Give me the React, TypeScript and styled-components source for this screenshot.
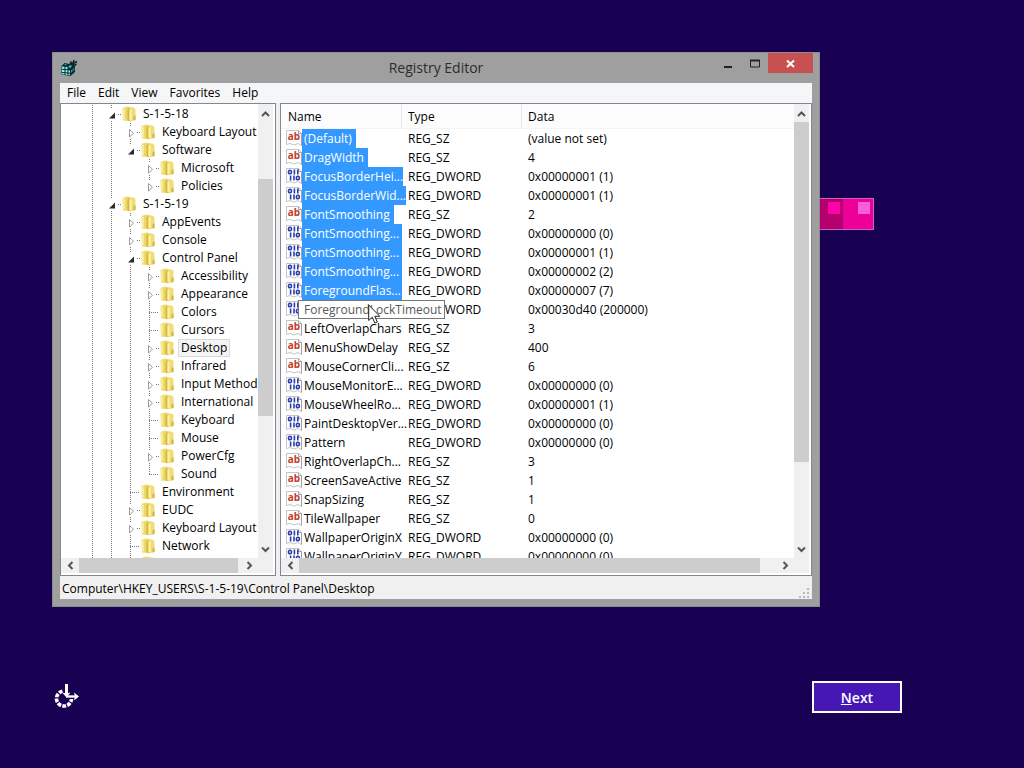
import React from "react";
import styled, { createGlobalStyle, css } from "styled-components";

const GlobalStyle = createGlobalStyle`
  *, *::before, *::after { box-sizing: border-box; }
  body {
    margin: 0;
    background: #180052;
    color: #000;
    font: 12px/18px "Open Sans", "Noto Sans", sans-serif;
  }
  button { margin: 0; padding: 0; border: 0; background: none; font: inherit; color: inherit; }
`;

const Desktop = styled.main`
  display: flex;
  flex-direction: column;
  min-height: 100vh;
  padding-top: 52px;
`;

const Stage = styled.div`
  display: flex;
  align-items: flex-start;
  padding-left: 52px;
`;

const Window = styled.section`
  display: flex;
  flex-direction: column;
  width: calc(100vw - 256px);
  height: calc(100vh - 213px);
  min-height: 300px;
  padding: 0 7px 7px;
  background: #9f9f9f;
  border: 1px solid #8c8c8c;
`;

const TitleBar = styled.header`
  display: grid;
  grid-template-columns: 92px 1fr 92px;
  flex: none;
  height: 30px;
  align-items: start;
`;

const AppIcon = styled.svg`
  margin: 6px 0 0 1px;
`;

const Title = styled.h1`
  margin: 0;
  padding-top: 4px;
  font-size: 14px;
  line-height: 22px;
  font-weight: 400;
  text-align: center;
  color: #2c2c2c;
`;

const Controls = styled.div`
  display: flex;
  justify-content: flex-end;
  margin-right: -1px;
`;

const ControlButton = styled.button<{ $close?: boolean }>`
  display: grid;
  place-items: center;
  flex: none;
  width: ${(p) => (p.$close ? 45 : 27)}px;
  height: 20px;
  background: ${(p) => (p.$close ? "#c75050" : "transparent")};
`;

const Client = styled.div`
  display: flex;
  flex-direction: column;
  flex: 1;
  min-height: 0;
  background: #f0f0f0;
`;

const MenuBar = styled.nav`
  display: flex;
  flex: none;
  height: 20px;
  padding-left: 1px;
  background: #f5f6f7;
`;

const MenuButton = styled.button`
  padding: 0 6px;
  line-height: 20px;
`;

const Panes = styled.div`
  display: grid;
  grid-template-columns: 216px minmax(0, 1fr);
  column-gap: 4px;
  flex: 1;
  min-height: 0;
`;

const Pane = styled.div`
  display: grid;
  grid-template-columns: minmax(0, 1fr) 15px;
  grid-template-rows: minmax(0, 1fr) 15px;
  min-height: 0;
  padding: 0 2px 2px 0;
  background: #fff;
  border: 1px solid #828790;
`;

const Viewport = styled.div`
  min-width: 0;
  overflow: hidden;
`;

const Bar = styled.div<{ $horizontal?: boolean }>`
  display: flex;
  flex-direction: ${(p) => (p.$horizontal ? "row" : "column")};
  background: #f0f0f0;
`;

const BarButton = styled.button<{ $horizontal?: boolean }>`
  display: grid;
  place-items: center;
  flex: none;
  ${(p) => (p.$horizontal ? css`width: 18px; height: 15px;` : css`width: 15px; height: 18px;`)}
`;

const BarSpace = styled.div<{ $share: number; $thumb?: boolean }>`
  flex: ${(p) => p.$share} 1 0;
  background: ${(p) => (p.$thumb ? "#cdcdcd" : "transparent")};
`;

const Corner = styled.div`
  background: #f0f0f0;
`;

const Tree = styled.ul`
  margin: 0;
  padding: 1px 0 0 22px;
  list-style: none;
`;

const TreeRow = styled.li`
  display: flex;
  height: 18px;
  white-space: nowrap;
`;

const TreeCell = styled.svg`
  flex: none;
`;

const TreeLabel = styled.span<{ $selected?: boolean }>`
  padding: 0 2px;
  line-height: 16px;
  border: 1px solid ${(p) => (p.$selected ? "#dadada" : "transparent")};
  background: ${(p) => (p.$selected ? "#f4f4f4" : "transparent")};
`;

const ValueTable = styled.table`
  width: 100%;
  table-layout: fixed;
  border-collapse: separate;
  border-spacing: 0;
`;

const HeadCell = styled.th<{ $width?: number; $first?: boolean }>`
  width: ${(p) => (p.$width ? `${p.$width}px` : "auto")};
  height: 25px;
  padding: 2px 6px 0 ${(p) => (p.$first ? 7 : 6)}px;
  font-weight: 400;
  text-align: left;
  background: #fcfcfc;
  border-right: ${(p) => (p.$width ? "1px solid #e6e6e6" : "0")};
  border-bottom: 1px solid #f4f4f4;
`;

const Cell = styled.td`
  height: 19px;
  padding: 0 6px;
  white-space: nowrap;
`;

const NameCell = styled.td`
  position: relative;
  height: 19px;
  padding: 0;
`;

const NameLine = styled.div`
  display: flex;
  padding-left: 5px;
  white-space: nowrap;
`;

const NameLabel = styled.span<{ $selected?: boolean; $full?: boolean }>`
  flex: ${(p) => (p.$full ? "1 0 auto" : "none")};
  padding: 0 ${(p) => (p.$full ? 0 : 4)}px 0 2px;
  line-height: 19px;
  color: ${(p) => (p.$selected ? "#fff" : "#000")};
  background: ${(p) => (p.$selected ? "#3399ff" : "transparent")};
`;

const Tooltip = styled.div`
  position: absolute;
  z-index: 1;
  top: 0;
  left: 17px;
  padding: 0 2px 0 5px;
  line-height: 17px;
  white-space: nowrap;
  color: #575757;
  background: #fff;
  border: 1px solid #767676;
`;

const Pointer = styled.svg`
  position: absolute;
  z-index: 2;
  top: 4px;
  left: 87px;
`;

const StatusBar = styled.footer`
  display: flex;
  justify-content: space-between;
  align-items: flex-end;
  flex: none;
  height: 23px;
  padding: 0 2px 0;
`;

const StatusText = styled.span`
  padding-bottom: 1px;
`;

const Footer = styled.div`
  display: flex;
  justify-content: space-between;
  align-items: center;
  margin-top: 74px;
  padding: 0 122px 0 52px;
`;

const EaseButton = styled.button`
  display: flex;
`;

const NextButton = styled.button`
  width: 90px;
  height: 32px;
  padding-top: 1px;
  border: 2px solid #fff;
  background: #4617b4;
  color: #fff;
  font-size: 14px;
  font-weight: 600;
`;

const Tile = styled.svg`
  margin-top: 146px;
`;

type Direction = "up" | "down" | "left" | "right";

const chevrons: Record<Direction, string> = {
  up: "M1 7 4.500 3.500 8 7",
  down: "M1 2.500 4.500 6 8 2.500",
  left: "M6.500 1 3 4.500 6.500 8",
  right: "M2.500 1 6 4.500 2.500 8",
};

function Arrow({ direction }: { direction: Direction }) {
  const horizontal = direction === "left" || direction === "right";
  return (
    <BarButton $horizontal={horizontal} aria-label={direction}>
      <svg width="9" height="9" viewBox="0 0 9 9">
        <path d={chevrons[direction]} fill="none" stroke="#555" strokeWidth="2" />
      </svg>
    </BarButton>
  );
}

function ScrollBar({ horizontal, shares }: { horizontal?: boolean; shares: [number, number, number] }) {
  return (
    <Bar $horizontal={horizontal}>
      <Arrow direction={horizontal ? "left" : "up"} />
      <BarSpace $share={shares[0]} />
      <BarSpace $share={shares[1]} $thumb />
      <BarSpace $share={shares[2]} />
      <Arrow direction={horizontal ? "right" : "down"} />
    </Bar>
  );
}

type Expander = "open" | "closed" | "leaf";
type Node = { label: string; level: number; state: Expander; last?: boolean; selected?: boolean };

const nodes: Node[] = [
  { label: "S-1-5-18", level: 1, state: "open" },
  { label: "Keyboard Layout", level: 2, state: "closed" },
  { label: "Software", level: 2, state: "open", last: true },
  { label: "Microsoft", level: 3, state: "closed" },
  { label: "Policies", level: 3, state: "closed", last: true },
  { label: "S-1-5-19", level: 1, state: "open" },
  { label: "AppEvents", level: 2, state: "closed" },
  { label: "Console", level: 2, state: "closed" },
  { label: "Control Panel", level: 2, state: "open" },
  { label: "Accessibility", level: 3, state: "closed" },
  { label: "Appearance", level: 3, state: "closed" },
  { label: "Colors", level: 3, state: "leaf" },
  { label: "Cursors", level: 3, state: "leaf" },
  { label: "Desktop", level: 3, state: "closed", selected: true },
  { label: "Infrared", level: 3, state: "closed" },
  { label: "Input Method", level: 3, state: "closed" },
  { label: "International", level: 3, state: "closed" },
  { label: "Keyboard", level: 3, state: "leaf" },
  { label: "Mouse", level: 3, state: "leaf" },
  { label: "PowerCfg", level: 3, state: "closed" },
  { label: "Sound", level: 3, state: "leaf", last: true },
  { label: "Environment", level: 2, state: "leaf" },
  { label: "EUDC", level: 2, state: "closed" },
  { label: "Keyboard Layout", level: 2, state: "closed" },
  { label: "Network", level: 2, state: "leaf" },
  { label: "", level: 2, state: "closed" },
];

/* A guide continues through a row when its branch still has siblings below. */
function hasGuide(index: number, level: number) {
  for (let i = index + 1; i < nodes.length; i++) {
    if (nodes[i].level < level) return false;
    if (nodes[i].level === level) return true;
  }
  return level < 2;
}

const dots = { stroke: "#777", strokeWidth: 1, strokeDasharray: "1 1" };

function GuideCell({ visible }: { visible: boolean }) {
  return (
    <TreeCell width="19" height="18" viewBox="0 0 19 18">
      {visible && <path d="M9.500 0V18" {...dots} />}
    </TreeCell>
  );
}

function ExpanderCell({ state, last }: { state: Expander; last?: boolean }) {
  return (
    <TreeCell width="19" height="18" viewBox="0 0 19 18">
      {state === "leaf" ? (
        <>
          <path d={last ? "M9.500 0V10" : "M9.500 0V18"} {...dots} />
          <path d="M9 9.500H19" {...dots} />
        </>
      ) : (
        <>
          <path d={last ? "M9.500 0V4" : "M9.500 0V4M9.500 16V18"} {...dots} />
          <path d="M16 9.500H19" {...dots} />
        </>
      )}
      {state === "open" && <path d="M13 7.500V13.500H7Z" fill="#2b2b2b" />}
      {state === "closed" && <path d="M8.500 6.500V14L12.500 10.250Z" fill="#fff" stroke="#999" />}
    </TreeCell>
  );
}

function Folder() {
  return (
    <TreeCell width="19" height="18" viewBox="0 0 19 18">
      <path d="M1.500 3 6 1.500 9 2V16L2 15.500Z" fill="#ecd968" />
      <path d="M8 2 12.500 2.500 14.500 4V15L8 16.500Z" fill="#f1dd74" />
      <path d="M3 3.500V14.500" stroke="#f7eb9c" strokeWidth="2" />
      <path d="M6.500 4.500 8.500 2.500V16L6.500 15.500Z" fill="#d6b63c" />
      <path d="M9.500 4.500V15" stroke="#fbf2ae" strokeWidth="2" />
      <path d="M12.500 11.500 14.500 10V15L12.500 15.500Z" fill="#d2b144" />
    </TreeCell>
  );
}

function TreeNode({ node, index }: { node: Node; index: number }) {
  const guides = Array.from({ length: node.level }, (_, level) => level);
  return (
    <TreeRow>
      {guides.map((level) => (
        <GuideCell key={level} visible={hasGuide(index, level)} />
      ))}
      <ExpanderCell state={node.state} last={node.last} />
      <Folder />
      <TreeLabel $selected={node.selected}>{node.label}</TreeLabel>
    </TreeRow>
  );
}

type Value = { name: string; dword?: boolean; data: string; selected?: boolean; tip?: string };

const values: Value[] = [
  { name: "(Default)", data: "(value not set)", selected: true },
  { name: "DragWidth", data: "4", selected: true },
  { name: "FocusBorderHei...", dword: true, data: "0x00000001 (1)", selected: true },
  { name: "FocusBorderWid...", dword: true, data: "0x00000001 (1)", selected: true },
  { name: "FontSmoothing", data: "2", selected: true },
  { name: "FontSmoothing...", dword: true, data: "0x00000000 (0)", selected: true },
  { name: "FontSmoothing...", dword: true, data: "0x00000001 (1)", selected: true },
  { name: "FontSmoothing...", dword: true, data: "0x00000002 (2)", selected: true },
  { name: "ForegroundFlas...", dword: true, data: "0x00000007 (7)", selected: true },
  { name: "", dword: true, data: "0x00030d40 (200000)", tip: "ForegroundLockTimeout" },
  { name: "LeftOverlapChars", data: "3" },
  { name: "MenuShowDelay", data: "400" },
  { name: "MouseCornerCli...", data: "6" },
  { name: "MouseMonitorE...", dword: true, data: "0x00000000 (0)" },
  { name: "MouseWheelRo...", dword: true, data: "0x00000001 (1)" },
  { name: "PaintDesktopVer...", dword: true, data: "0x00000000 (0)" },
  { name: "Pattern", dword: true, data: "0x00000000 (0)" },
  { name: "RightOverlapCh...", data: "3" },
  { name: "ScreenSaveActive", data: "1" },
  { name: "SnapSizing", data: "1" },
  { name: "TileWallpaper", data: "0" },
  { name: "WallpaperOriginX", dword: true, data: "0x00000000 (0)" },
  { name: "WallpaperOriginY", dword: true, data: "0x00000000 (0)" },
];

function ValueIcon({ dword }: { dword?: boolean }) {
  return (
    <TreeCell width="16" height="19" viewBox="0 0 16 19">
      <path d="M.5 1.500H12.500L15.500 4.500V16.500L12 14.500 8 16 4 14.500 .5 15.500Z" fill="#fff" stroke="#c4c4c4" />
      <path d="M12.500 1.500V4.500H15.500V16.500" fill="none" stroke="#a2a2a2" />
      {dword ? (
        <g fill="none" stroke="#2a3cab" strokeWidth="1.600">
          <ellipse cx="4" cy="5" rx="1.500" ry="1.800" />
          <path d="M8.400 2.500V7.400M11.800 2.500V7.400M4.600 8.600V13.500M8 8.600V13.500" />
          <ellipse cx="11.900" cy="11" rx="1.500" ry="1.800" />
        </g>
      ) : (
        <text x="1.800" y="11" fontFamily="Open Sans, sans-serif" fontSize="10" fontWeight="700" fill="#c33c2c">
          ab
        </text>
      )}
    </TreeCell>
  );
}

function ValueRow({ value }: { value: Value }) {
  return (
    <tr>
      <NameCell>
        <NameLine>
          <ValueIcon dword={value.dword} />
          <NameLabel $selected={value.selected} $full={value.name.endsWith("...")}>
            {value.name}
          </NameLabel>
        </NameLine>
        {value.tip && (
          <>
            <Tooltip role="tooltip">{value.tip}</Tooltip>
            <Pointer width="13" height="21" viewBox="0 0 13 21">
              <path
                d="M.7 1V16.500L4.300 13.200 6.800 19 9.300 18 6.800 12.300H11.800Z"
                fill="#fff"
                stroke="#222"
              />
            </Pointer>
          </>
        )}
      </NameCell>
      <Cell>{value.dword ? "REG_DWORD" : "REG_SZ"}</Cell>
      <Cell>{value.data}</Cell>
    </tr>
  );
}

function RegistryIcon() {
  return (
    <AppIcon width="17" height="18" viewBox="0 0 17 18">
      <path d="M.5 7 3.500 4 8 5 10 3 12.500 4.500 14 7V13L9.500 17 .5 15.500Z" fill="#0a2a2c" />
      <path d="M1 7.500 3.500 7.700V10L1 9.800ZM4.500 7.800 6.500 8V10.300L4.500 10.100ZM1 10.700 3.500 11V13.200L1 13ZM4.500 11 6.500 11.300V13.500L4.500 13.300ZM7.500 11.300 9 11.500V13.800L7.500 13.600ZM1 14 3.500 14.200V15.500L1 15.200ZM4.500 14.300 6.500 14.500V16L4.500 15.700ZM7.500 14.500 9 14.700V16.300L7.500 16Z" fill="#8ff2ee" />
      <path d="M10 11.500 11.500 10V12.500L10 14ZM12.300 9.300 13.300 8.300V11L12.300 12ZM4 5 6 5.300 5 6.300 3 6Z" fill="#2e9fa0" />
      <path d="M7 8 9 6 11 7 9.500 9Z" fill="#3fb9b8" />
      <path d="M9.500 2.500 11.500 5M13 1 12 4.500 16 2.500M13 6.500 15.500 5" stroke="#0a2a2c" strokeWidth="1.500" fill="none" />
    </AppIcon>
  );
}

export default function App() {
  return (
    <Desktop>
      <GlobalStyle />
      <Stage>
        <Window>
          <TitleBar>
            <RegistryIcon />
            <Title>Registry Editor</Title>
            <Controls>
              <ControlButton aria-label="Minimize">
                <svg width="9" height="9" viewBox="0 0 9 9">
                  <path d="M1 8H9" stroke="#222" strokeWidth="2" />
                </svg>
              </ControlButton>
              <ControlButton aria-label="Maximize">
                <svg width="11" height="9" viewBox="0 0 11 9">
                  <path d="M1.500 1.500H10.500V8H1.500Z" fill="none" stroke="#222" />
                  <path d="M1 1.500H11" stroke="#222" strokeWidth="2" />
                </svg>
              </ControlButton>
              <ControlButton $close aria-label="Close">
                <svg width="9" height="9" viewBox="0 0 9 9">
                  <path d="M1 1.500 8 8M8 1.500 1 8" stroke="#fff" strokeWidth="2" />
                </svg>
              </ControlButton>
            </Controls>
          </TitleBar>
          <Client>
            <MenuBar>
              {["File", "Edit", "View", "Favorites", "Help"].map((item) => (
                <MenuButton key={item}>{item}</MenuButton>
              ))}
            </MenuBar>
            <Panes>
              <Pane>
                <Viewport>
                  <Tree>
                    {nodes.map((node, index) => (
                      <TreeNode key={index} node={node} index={index} />
                    ))}
                  </Tree>
                </Viewport>
                <ScrollBar shares={[57, 238, 125]} />
                <ScrollBar horizontal shares={[0, 160, 2]} />
                <Corner />
              </Pane>
              <Pane>
                <Viewport>
                  <ValueTable>
                    <thead>
                      <tr>
                        <HeadCell $width={121} $first>
                          Name
                        </HeadCell>
                        <HeadCell $width={120}>Type</HeadCell>
                        <HeadCell>Data</HeadCell>
                      </tr>
                    </thead>
                    <tbody>
                      {values.map((value, index) => (
                        <ValueRow key={index} value={value} />
                      ))}
                    </tbody>
                  </ValueTable>
                </Viewport>
                <ScrollBar shares={[0, 341, 78]} />
                <ScrollBar horizontal shares={[0, 462, 16]} />
                <Corner />
              </Pane>
            </Panes>
            <StatusBar>
              <StatusText>Computer\HKEY_USERS\S-1-5-19\Control Panel\Desktop</StatusText>
              <svg width="11" height="11" viewBox="0 0 11 11">
                <path
                  d="M8 0H10V2H8ZM8 4H10V6H8ZM4 4H6V6H4ZM8 8H10V10H8ZM4 8H6V10H4ZM0 8H2V10H0Z"
                  fill="#b8b8b8"
                />
              </svg>
            </StatusBar>
          </Client>
        </Window>
        <Tile width="54" height="32" viewBox="0 0 54 32">
          <path d="M0 0H54V32H0Z" fill="#c95fc0" />
          <path d="M0 1H23V31H0Z" fill="#b4006c" />
          <path d="M23 1H53V31H23Z" fill="#ec0099" />
          <path d="M8 4H20V16H8Z" fill="#ff00aa" />
          <path d="M38 4H50V16H38Z" fill="#fb5fd8" />
        </Tile>
      </Stage>
      <Footer>
        <EaseButton aria-label="Ease of access">
          <svg width="28" height="28" viewBox="0 0 28 28" fill="none" stroke="#fff">
            <path d="M10.500 8.200A7.500 7.500 0 1 0 19.500 16" strokeWidth="3.600" strokeDasharray="3.800 1.200" />
            <path d="M14.500 1V12" strokeWidth="3" />
            <path d="M14 13.500H23" strokeWidth="2.400" />
            <path d="M10.200 9.500 14.500 10.500 18.500 9.500 14.500 14.500ZM22 9.500 27 13.500 22 17.500 23 13.500Z" fill="#fff" stroke="none" />
          </svg>
        </EaseButton>
        <NextButton>
          <u>N</u>ext
        </NextButton>
      </Footer>
    </Desktop>
  );
}
